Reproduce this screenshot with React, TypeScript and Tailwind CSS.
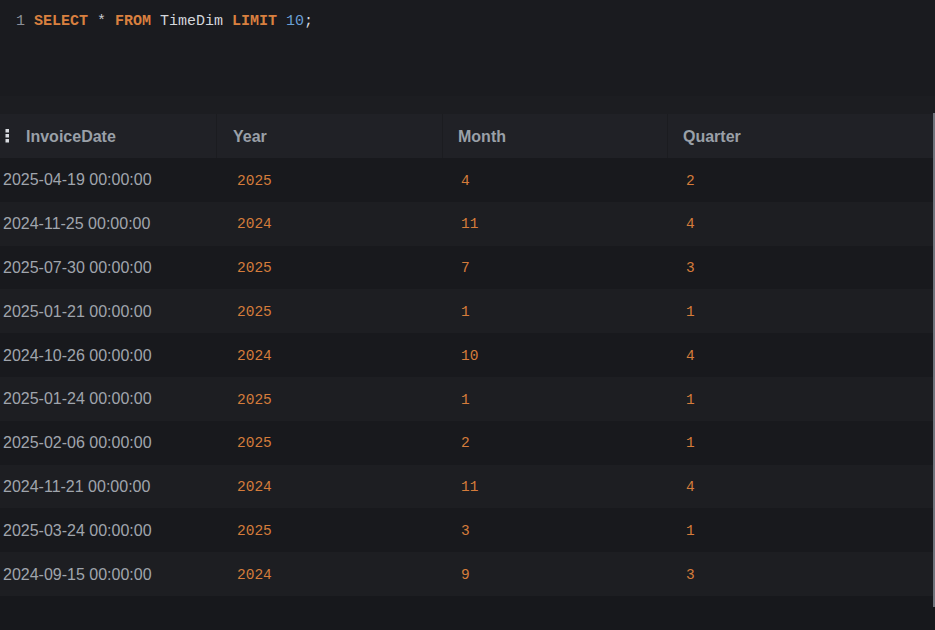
import React from "react";

const rows: [string, string, string, string][] = [
  ["2025-04-19 00:00:00", "2025", "4", "2"],
  ["2024-11-25 00:00:00", "2024", "11", "4"],
  ["2025-07-30 00:00:00", "2025", "7", "3"],
  ["2025-01-21 00:00:00", "2025", "1", "1"],
  ["2024-10-26 00:00:00", "2024", "10", "4"],
  ["2025-01-24 00:00:00", "2025", "1", "1"],
  ["2025-02-06 00:00:00", "2025", "2", "1"],
  ["2024-11-21 00:00:00", "2024", "11", "4"],
  ["2025-03-24 00:00:00", "2025", "3", "1"],
  ["2024-09-15 00:00:00", "2024", "9", "3"],
];

const mono = { fontFamily: '"Liberation Mono", "DejaVu Sans Mono", monospace' };
const sans = { fontFamily: '"Liberation Sans", Arial, sans-serif' };

export default function App() {
  return (
    <div className="relative w-[935px] h-[630px] bg-[#17181c] flex flex-col overflow-hidden">
      {/* Editor */}
      <div className="h-[96px] bg-[#1a1b1f] pl-[16px] pt-[12px]">
        <div className="text-[15px] leading-[20px] whitespace-pre" style={mono}>
          <span className="text-[#8a8f98]">1 </span>
          <span className="text-[#d9803f] font-bold">SELECT</span>
          <span className="text-[#c9ccd1]"> * </span>
          <span className="text-[#d9803f] font-bold">FROM</span>
          <span className="text-[#d4d7dc]"> TimeDim </span>
          <span className="text-[#d9803f] font-bold">LIMIT</span>
          <span className="text-[#6a9fd4]"> 10</span>
          <span className="text-[#d4d7dc]">;</span>
        </div>
      </div>
      <div className="h-[18px] bg-[#1c1d21]" />
      {/* Table */}
      <div className="flex flex-col" style={sans}>
        <div className="grid grid-cols-[217px_226px_225px_1fr] h-[44px] bg-[#202126] text-[16px] font-bold text-[#9aa0a8]">
          <div className="flex items-center pt-[2px] border-r border-[#1b1c20]">
            <svg width="5" height="14" viewBox="0 0 5 14" className="ml-[5px] mr-[16px] -mt-[3px]">
              <rect x="0.5" y="0" width="3.5" height="3.5" fill="#d8dbe0" />
              <rect x="0.5" y="5" width="3.5" height="3.5" fill="#d8dbe0" />
              <rect x="0.5" y="10" width="3.5" height="3.5" fill="#d8dbe0" />
            </svg>
            InvoiceDate
          </div>
          <div className="flex items-center pt-[2px] pl-[16px] border-r border-[#1b1c20]">Year</div>
          <div className="flex items-center pt-[2px] pl-[15px] border-r border-[#1b1c20]">Month</div>
          <div className="flex items-center pt-[2px] pl-[15px]">Quarter</div>
        </div>
        {rows.map((r, i) => (
          <div
            key={i}
            className={`grid grid-cols-[217px_226px_225px_1fr] h-[43.8px] items-center ${
              i % 2 === 0 ? "bg-[#18191d]" : "bg-[#1d1e22]"
            }`}
          >
            <div className="pl-[3px] pt-[1px] text-[16px] text-[#a0a5ad]">{r[0]}</div>
            <div className="pl-[20px] pt-[3px] text-[14.5px] text-[#d57c3b]" style={mono}>{r[1]}</div>
            <div className="pl-[18px] pt-[3px] text-[14.5px] text-[#d57c3b]" style={mono}>{r[2]}</div>
            <div className="pl-[18px] pt-[3px] text-[14.5px] text-[#d57c3b]" style={mono}>{r[3]}</div>
          </div>
        ))}
      </div>
      {/* overlay scrollbar */}
      <div className="absolute left-[933px] top-[113px] w-[2px] h-[494px] bg-[#6e737b]" />
    </div>
  );
}
